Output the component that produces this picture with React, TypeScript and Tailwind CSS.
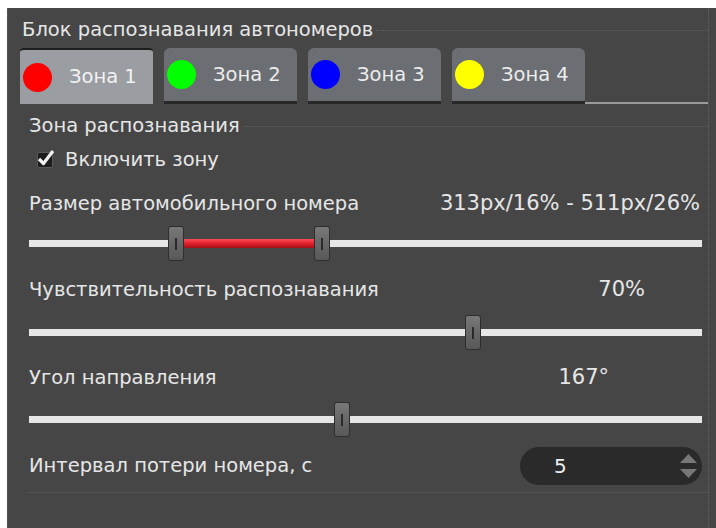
import React from "react";

const font = { fontFamily: '"DejaVu Sans", "Noto Sans", sans-serif' };

type Zone = { name: string; color: string; active?: boolean };

const zones: Zone[] = [
  { name: "Зона 1", color: "#ff0000", active: true },
  { name: "Зона 2", color: "#00ff00" },
  { name: "Зона 3", color: "#0000ff" },
  { name: "Зона 4", color: "#ffff00" },
];

function Tab({ zone }: { zone: Zone }) {
  if (zone.active) {
    return (
      <div className="flex h-[56px] w-[133px] items-center rounded-t-[4px] border-t-[2px] border-[#1e1e1e] bg-[#9a9da2] pl-[3px]">
        <span className="h-[29px] w-[29px] rounded-full" style={{ background: zone.color }} />
        <span className="ml-[17px] text-[19.5px] text-[#f2f2f2]">{zone.name}</span>
      </div>
    );
  }
  return (
    <div className="flex h-[56px] w-[133px] items-center rounded-t-[6px] border-b-[3px] border-[#262626] bg-[#6b6e72] pl-[3px]">
      <span className="h-[29px] w-[29px] rounded-full" style={{ background: zone.color }} />
      <span className="ml-[17px] text-[19.5px] text-[#ececec]">{zone.name}</span>
    </div>
  );
}

function Thumb({ left }: { left: number }) {
  return (
    <div
      className="absolute top-0 flex h-[35px] w-[16px] -translate-x-1/2 items-center justify-center rounded-[3px] border border-[#2e2e2e] bg-gradient-to-b from-[#787878] to-[#585858]"
      style={{ left }}
    >
      <div className="h-[12px] w-[2px] bg-[#2a2a2a]" />
    </div>
  );
}

function Slider({ thumbs, range }: { thumbs: number[]; range?: boolean }) {
  return (
    <div className="relative h-[35px] w-[673px]">
      <div className="absolute left-0 right-0 top-[14px] h-[7px] bg-[#e6e6e6]" />
      {range && (
        <div
          className="absolute top-[13px] h-[9px] bg-gradient-to-b from-[#ff4a55] via-[#e0202c] to-[#a01018]"
          style={{ left: thumbs[0], width: thumbs[1] - thumbs[0] }}
        />
      )}
      {thumbs.map((t) => (
        <Thumb key={t} left={t} />
      ))}
    </div>
  );
}

function Spin() {
  return (
    <div className="flex h-[38px] w-[182px] items-center rounded-full bg-[#2a2a2a] pl-[34px] pr-[5px]">
      <span className="flex-1 text-[20px] text-[#eeeeee]">5</span>
      <div className="flex flex-col items-center gap-[6px]">
        <svg width="17" height="9" viewBox="0 0 17 9">
          <path d="M0 9 L8.5 0 L17 9 Z" fill="#777" />
        </svg>
        <svg width="17" height="9" viewBox="0 0 17 9">
          <path d="M0 0 L8.5 9 L17 0 Z" fill="#777" />
        </svg>
      </div>
    </div>
  );
}

export default function App() {
  return (
    <div className="h-[528px] w-[716px] overflow-hidden bg-white pl-[7px] pt-[8px]" style={font}>
      <div className="h-full w-[709px] bg-[#464646] text-[#e6e6e6]">
        <div className="mr-[7px] h-full border-l border-r border-dotted border-[#5f5f5f] pt-[11px]">
          {/* group title */}
          <div className="flex h-[22px] items-center">
            <span className="ml-[14px] text-[19.5px] leading-[22px]">Блок распознавания автономеров</span>
            <div className="ml-[3px] flex-1 border-t border-dotted border-[#606060]" />
          </div>

          {/* zone tabs */}
          <div className="mt-[7px] flex items-end pl-[12px]">
            <div className="flex items-end gap-[11px]">
              {zones.map((z) => (
                <Tab key={z.name} zone={z} />
              ))}
            </div>
            <div className="h-[2px] flex-1 bg-[#9a9a9a]" />
          </div>

          {/* zone settings */}
          <div className="ml-[13px] mt-[2px] pl-[8px]">
            <div className="flex h-[40px] items-center">
              <span className="text-[19.5px]">Зона распознавания</span>
              <div className="ml-[4px] flex-1 border-t border-dotted border-[#606060]" />
            </div>
            <div className="flex h-[28px] items-center pl-[8px]">
              <div className="relative h-[16px] w-[16px] rounded-[2px] border border-[#5a5a5a] bg-[#1c1c1c]">
                <svg className="absolute -left-[2px] -top-[5px]" width="20" height="20" viewBox="0 0 20 20">
                  <path d="M3 11 L7.5 15.5 L17 3" stroke="#f0f0f0" strokeWidth="3.2" fill="none" strokeLinejoin="round" />
                </svg>
              </div>
              <span className="ml-[12px] text-[19.5px]">Включить зону</span>
            </div>

            <div className="mt-[15px] flex h-[30px] items-center pr-[8px]">
              <span className="text-[19.5px]">Размер автомобильного номера</span>
              <span className="ml-auto text-[21px]">313px/16% - 511px/26%</span>
            </div>
            <div className="mt-[7px]">
              <Slider thumbs={[147, 293]} range />
            </div>

            <div className="mt-[14px] flex h-[30px] items-center pr-[63px]">
              <span className="text-[19.5px]">Чувствительность распознавания</span>
              <span className="ml-auto text-[21px]">70%</span>
            </div>
            <div className="mt-[10px]">
              <Slider thumbs={[444]} />
            </div>

            <div className="mt-[13px] flex h-[30px] items-center pr-[99px]">
              <span className="text-[19.5px]">Угол направления</span>
              <span className="ml-auto text-[21px]">167°</span>
            </div>
            <div className="mt-[9px]">
              <Slider thumbs={[313]} />
            </div>

            <div className="mt-[10px] flex h-[38px] items-center pr-[6px]">
              <span className="text-[19.5px]">Интервал потери номера, с</span>
              <div className="ml-auto">
                <Spin />
              </div>
            </div>
            <div className="mt-[7px] border-t border-dotted border-[#606060]" />
          </div>
        </div>
      </div>
    </div>
  );
}
